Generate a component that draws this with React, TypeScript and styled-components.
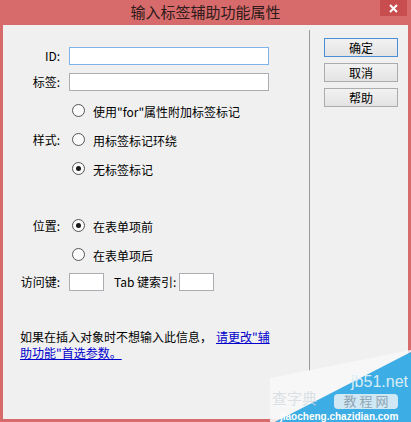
import React from 'react'
import styled, { createGlobalStyle } from 'styled-components'

const GlobalStyle = createGlobalStyle`
  html, body {
    margin: 0;
    padding: 0;
    background: #ffffff;
  }
  body {
    font-family: "Liberation Sans", "Noto Sans CJK SC", sans-serif;
    font-size: 12px;
    color: #000;
  }
`

const Window = styled.div`
  position: relative;
  width: 411px;
  height: 422px;
  background: #d76a6b;
  display: flex;
  flex-direction: column;
  overflow: hidden;
`

const TitleBar = styled.div`
  height: 25px;
  display: grid;
  grid-template-columns: 1fr auto 1fr;
  align-items: start;
`

const TitleText = styled.div`
  grid-column: 2;
  font-family: "Noto Sans CJK SC", sans-serif;
  font-size: 15px;
  line-height: 24px;
  color: #2e1a1a;
`

const CloseButton = styled.div`
  grid-column: 3;
  justify-self: end;
  width: 27px;
  height: 16px;
  margin-right: 4px;
  background: #c84d4e;
  display: flex;
  align-items: center;
  justify-content: center;
`

const Client = styled.div`
  flex: 1;
  margin: 0 3px 3px 3px;
  background: #f0f0f0;
  display: flex;
`

const Form = styled.div`
  width: 306px;
  padding-top: 22px;
  display: flex;
  flex-direction: column;
  font-family: "Noto Sans CJK SC", sans-serif;
`

const Field = styled.div<{ $h: number; $mt?: number }>`
  display: grid;
  grid-template-columns: 57px auto;
  column-gap: 9px;
  align-items: center;
  height: ${(p) => p.$h}px;
  margin-top: ${(p) => p.$mt ?? 0}px;
`

const Label = styled.span`
  justify-self: end;
  font-size: 12px;
  line-height: 16px;
  white-space: nowrap;
`

const TextBox = styled.div<{ $w: number; $focus?: boolean }>`
  box-sizing: border-box;
  width: ${(p) => p.$w}px;
  height: 18px;
  background: #ffffff;
  border: 1px solid ${(p) => (p.$focus ? '#7eb4ea' : '#abadb3')};
`

const RadioRow = styled.div`
  display: flex;
  align-items: center;
  gap: 8px;
  font-size: 12px;
  line-height: 16px;
  white-space: nowrap;
`

const RadioCircle = styled.span<{ $checked?: boolean }>`
  box-sizing: border-box;
  width: 13px;
  height: 13px;
  margin-left: 3px;
  border-radius: 50%;
  border: 1px solid #555;
  background: #fbfbfb;
  display: flex;
  align-items: center;
  justify-content: center;
  &::after {
    content: '';
    width: 5px;
    height: 5px;
    border-radius: 50%;
    background: ${(p) => (p.$checked ? '#1a1a1a' : 'transparent')};
  }
`

const RadioText = styled.span`
  padding-top: 3px;
`

const KeyRow = styled.div`
  display: flex;
  align-items: center;
  font-size: 12px;
`

const KeyLabel = styled.span`
  margin: 0 3px 0 10px;
  line-height: 16px;
`

const Note = styled.div`
  margin: 38px 0 0 17px;
  font-size: 12px;
  line-height: 16px;
`

const NoteLine = styled.div`
  white-space: nowrap;
`

const NoteLink = styled.a<{ $gap?: boolean }>`
  color: #0000cc;
  text-decoration: underline;
  margin-left: ${(p) => (p.$gap ? 4 : 0)}px;
`

const Divider = styled.div`
  width: 1px;
  margin: 5px 0 47px 0;
  background: #9a9a9a;
`

const ButtonColumn = styled.div`
  padding: 13px 0 0 14px;
  display: flex;
  flex-direction: column;
  gap: 6px;
`

const Button = styled.div<{ $default?: boolean }>`
  box-sizing: border-box;
  width: 74px;
  height: 19px;
  border: 1px solid ${(p) => (p.$default ? '#4a8fd6' : '#acacac')};
  background: linear-gradient(#f2f2f2, #e3e3e3);
  font-family: "Noto Sans CJK SC", sans-serif;
  font-size: 12px;
  line-height: 17px;
  text-align: center;
`

const Watermark = styled.svg`
  position: absolute;
  left: 260px;
  top: 340px;
  width: 151px;
  height: 82px;
`

function Radio({ checked, children }: { checked?: boolean; children: React.ReactNode }) {
  return (
    <RadioRow>
      <RadioCircle $checked={checked} />
      <RadioText>{children}</RadioText>
    </RadioRow>
  )
}

export default function App() {
  return (
    <Window>
      <GlobalStyle />
      <TitleBar>
        <TitleText>输入标签辅助功能属性</TitleText>
        <CloseButton>
          <svg width="9" height="9" viewBox="0 0 9 9">
            <path d="M1 1 L8 8 M8 1 L1 8" stroke="#ffffff" strokeWidth="2" />
          </svg>
        </CloseButton>
      </TitleBar>
      <Client>
        <Form>
          <Field $h={18}>
            <Label>ID:</Label>
            <TextBox $w={200} $focus />
          </Field>
          <Field $h={18} $mt={8}>
            <Label>标签:</Label>
            <TextBox $w={200} />
          </Field>
          <Field $h={29} $mt={5}>
            <Label />
            <Radio>使用"for"属性附加标签标记</Radio>
          </Field>
          <Field $h={29}>
            <Label>样式:</Label>
            <Radio>用标签标记环绕</Radio>
          </Field>
          <Field $h={29}>
            <Label />
            <Radio checked>无标签标记</Radio>
          </Field>
          <Field $h={29} $mt={28}>
            <Label>位置:</Label>
            <Radio checked>在表单项前</Radio>
          </Field>
          <Field $h={29}>
            <Label />
            <Radio>在表单项后</Radio>
          </Field>
          <Field $h={18} $mt={4}>
            <Label>访问键:</Label>
            <KeyRow>
              <TextBox $w={35} />
              <KeyLabel>Tab 键索引:</KeyLabel>
              <TextBox $w={35} />
            </KeyRow>
          </Field>
          <Note>
            <NoteLine>
              如果在插入对象时不想输入此信息，<NoteLink $gap href="#">请更改"辅</NoteLink>
            </NoteLine>
            <NoteLine>
              <NoteLink href="#">助功能"首选参数。</NoteLink>
            </NoteLine>
          </Note>
        </Form>
        <Divider />
        <ButtonColumn>
          <Button $default>确定</Button>
          <Button>取消</Button>
          <Button>帮助</Button>
        </ButtonColumn>
      </Client>
      <Watermark viewBox="0 0 151 82">
        <polygon points="10,38 151,10 151,12 15,82 10,82" fill="#f7f7f7" opacity="0.9" />
        <polygon points="151,12 151,82 15,82" fill="#3daee5" />
        <text x="148" y="47" textAnchor="end" fontFamily="Liberation Sans, sans-serif" fontSize="16" fill="#d8ecf7">jb51.net</text>
        <rect x="74" y="54" width="64" height="15" rx="4" fill="#e9f2f7" opacity="0.85" />
        <text x="106" y="66" textAnchor="middle" fontFamily="Noto Sans CJK SC, sans-serif" fontSize="13" fill="#8fa5b3">教 程 网</text>
        <text x="12" y="64" fontFamily="Noto Sans CJK SC, sans-serif" fontSize="15" fill="#cfd6dc" opacity="0.7">查字典</text>
        <text x="20" y="80" fontFamily="Liberation Sans, sans-serif" fontSize="10" fontWeight="bold" fill="#ffffff">jiaocheng.chazidian.com</text>
      </Watermark>
    </Window>
  )
}
